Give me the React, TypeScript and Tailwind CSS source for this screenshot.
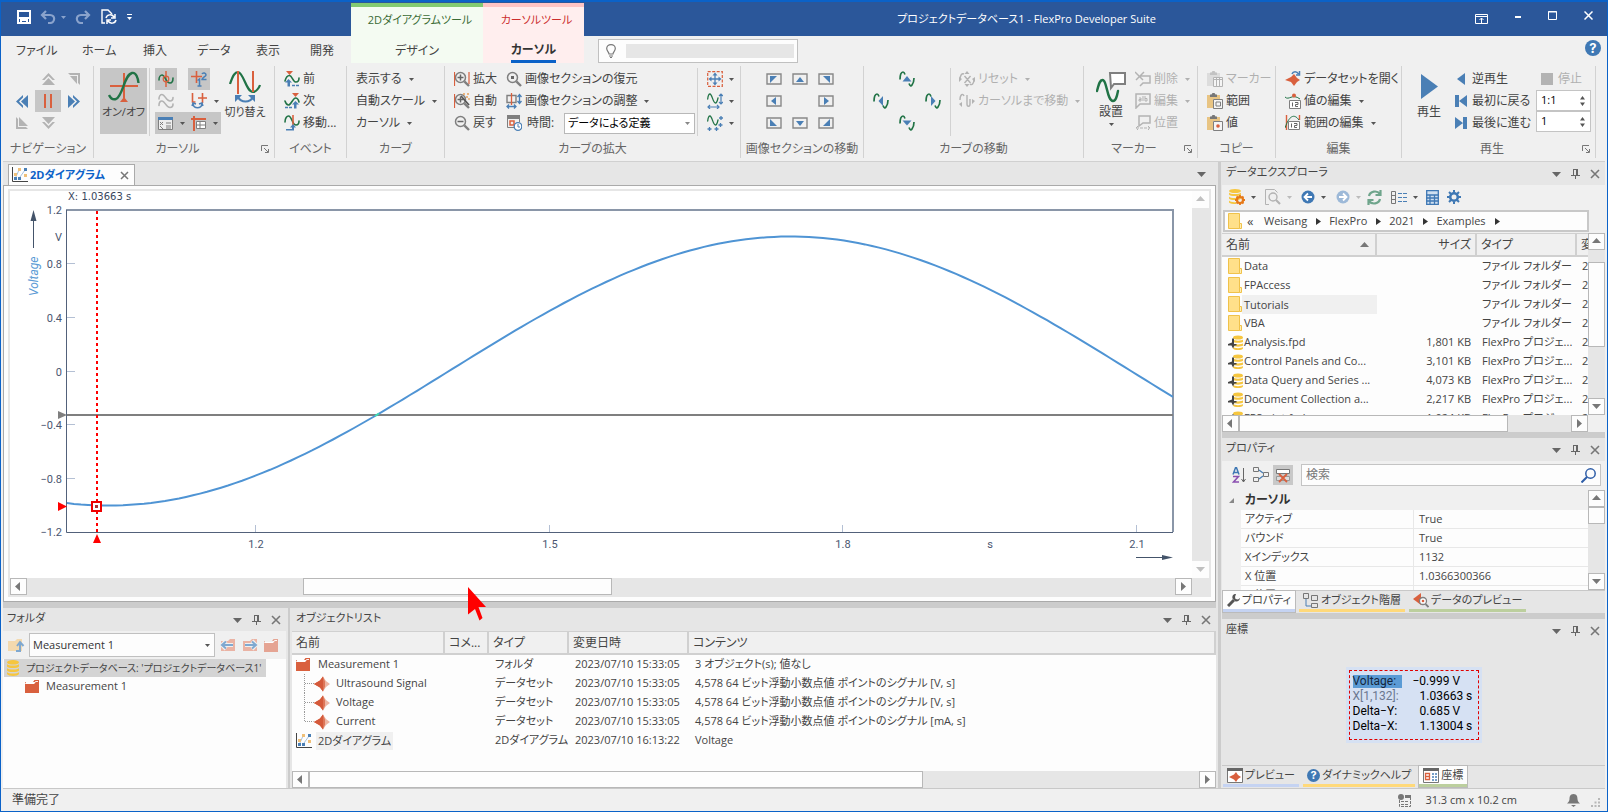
import React from "react";

type P = { children?: React.ReactNode; className?: string };

const GREEN = "#217346";
const ORANGE = "#d9603e";
const BLUE = "#4a7fb5";
const GRAY = "#7f7f7f";
const OFF = "#b3b3b3";

/* ---------- icon primitives ---------- */

function Icon({ w = 16, h = 16, box, children, className = "" }: P & { w?: number; h?: number; box?: string }) {
  return (
    <svg
      width={w}
      height={h}
      viewBox={box ?? `0 0 ${w} ${h}`}
      fill="none"
      aria-hidden="true"
      className={`block shrink-0 ${className}`}
    >
      {children}
    </svg>
  );
}

const Caret = ({ color = "#555" }: { color?: string }) => (
  <Icon w={5} h={3}>
    <path d="M0 0h5L2.500 3z" fill={color} />
  </Icon>
);

const BigCaret = () => (
  <Icon w={9} h={5}>
    <path d="M0 0h9L4.500 5z" fill="#666" />
  </Icon>
);

const Wave = ({ color = GREEN, d = "M1 9C1 6 2.500 4 4 4C7 4 8 12 12 12C14 12 15 10 15 7", width = 1.6 }) => (
  <path d={d} stroke={color} strokeWidth={width} strokeLinecap="round" />
);

const FolderIcon = ({ color = "#d9603e" }: { color?: string }) => (
  <Icon w={16} h={15}>
    <path d="M0 3h8l1.500-2H14v2H1v2z" fill={color} />
    <path d="M0 5l9 0 1.500-2H14v11H0z" fill={color} />
    <path d="M1 4.500h8l1.500-2H13" stroke="#fff" strokeWidth=".9" />
  </Icon>
);

const DatasetIcon = ({ size = 16 }: { size?: number }) => (
  <Icon w={size} h={size} box="0 0 16 16">
    <path d="M0 8L6 4.500 9 .5 12 5l4 3-4 3-3 4.500L6 11.500z" fill="#edb5a3" />
    <path d="M0 8L6 4.500 9 .5l2 5V10.500l-2 5-3-4z" fill="#dd7557" />
    <path d="M0 8L6 4.500 9 .5v15l-3-4z" fill="#d4593a" />
  </Icon>
);

const DbIcon = ({ w = 12, h = 16 }) => (
  <Icon w={w} h={h} box="0 0 12 16">
    <ellipse cx="6" cy="2.300" rx="6" ry="2.300" fill="#f6c63f" />
    <path d="M0 4c1 2 11 2 12 0v2.500c-1 2-11 2-12 0z" fill="#f6c63f" />
    <path d="M0 8c1 2 11 2 12 0v2.500c-1 2-11 2-12 0z" fill="#f6c63f" />
    <path d="M0 12c1 2 11 2 12 0v2c-1 2.500-11 2.500-12 0z" fill="#f6c63f" />
  </Icon>
);

const ProjectIcon = () => (
  <Icon w={16} h={16}>
    <ellipse cx="10" cy="2.500" rx="5" ry="2" fill="#f6c63f" />
    <path d="M5 4.500c1 1.500 9 1.500 10 0v2.200c-1 1.500-9 1.500-10 0zM5 8.300c1 1.500 9 1.500 10 0v2.200c-1 1.500-9 1.500-10 0zM5 12c1 1.500 9 1.500 10 0v1.600c-1 2-9 2-10 0z" fill="#f6c63f" />
    <path d="M4 3.500h2V9h2.500v1.500H6.500L5 13.500l-1.500-3H0V9l4-1.500z" fill="#444" />
  </Icon>
);

const YellowFolder = () => (
  <Icon w={14} h={17}>
    <path d="M.5.5h11v15H.5z" fill="#ffe08a" stroke="#f0c24a" />
    <path d="M11.500 10.500h2v5h-2z" fill="#ffeeb4" stroke="#f0c24a" />
  </Icon>
);

const DiagramIcon = () => (
  <Icon w={16} h={16}>
    <path d="M.5 0v14.500H16" stroke="#444" />
    <path d="M3 12L7 3M8 10l5-7" stroke="#a8c2dc" />
    <path d="M2 6h3v3H2zM6 1h3v3H6zM12 7h3v3h-3z" fill="#f0c078" />
    <path d="M2 10h3v3H2zM6 10h3v3H6zM12 1h3v3h-3z" fill={BLUE} />
  </Icon>
);

const HelpIcon = () => (
  <span className="flex size-4 shrink-0 items-center justify-center rounded-full bg-[#3f78b4] font-[Inter] text-[13px] leading-none font-bold text-white">?</span>
);

const SmallHelpIcon = () => (
  <span className="flex size-[13px] shrink-0 items-center justify-center rounded-full bg-[#3f78b4] font-[Inter] text-[11px] leading-none font-bold text-white">?</span>
);

const Lens = ({ children }: P) => (
  <Icon>
    <circle cx="6.500" cy="6.500" r="5" stroke={GRAY} strokeWidth="1.500" />
    <path d="M10.300 10.300L15 15" stroke={GRAY} strokeWidth="2.400" />
    {children}
  </Icon>
);

const Clip = ({ off, children }: P & { off?: boolean }) => (
  <Icon>
    <path d="M0 2h13v4H6v9H0z" fill={off ? "#dcdcdc" : "#e8c483"} />
    <path d="M3 1.500h1.500L5.500 0h2l1 1.500H10v2.500H3z" fill={off ? "#c2c2c2" : "#777"} />
    <path d="M6.500 6.500h9v9h-9z" fill="#f5f5f5" stroke={off ? OFF : GRAY} />
    {children}
  </Icon>
);

const CurvePair = ({ tri, off }: { tri: string; off?: boolean }) => (
  <Icon>
    <path d="M1 8.500C1 4 2 1 4 1C5 1 5.500 2 6 3.500" stroke={off ? OFF : GREEN} strokeWidth="1.700" />
    <path d="M10 12.500C11 15 12 15.500 13 14C14.500 12 15 10 15 7" stroke={off ? OFF : GREEN} strokeWidth="1.700" />
    <path d={tri} fill={off ? OFF : BLUE} />
  </Icon>
);

const FrameTri = ({ tri }: { tri: string }) => (
  <Icon w={16} h={12}>
    <path d="M1 1h14v10H1z" stroke="#888" strokeWidth="1.400" />
    <path d={tri} fill={BLUE} />
  </Icon>
);

const T = {
  up: "M3.500 10.500L8 5l4.500 5.500z",
  down: "M3.500 5.500h9L8 10.500z",
  left: "M10 3v10L5.500 8z",
  right: "M6 3v10l4.500-5z",
};

/* ---------- ribbon building blocks ---------- */

function Group({ label, width, launcher, children }: P & { label: string; width: string; launcher?: boolean }) {
  return (
    <section className={`flex h-[92px] shrink-0 flex-col border-r border-[#d2d2d2] pt-[2px] ${width}`}>
      <div className="flex h-[66px]">{children}</div>
      <div className="flex flex-1 items-center pt-[6px] text-[#666]">
        <span className="flex-1 text-center whitespace-nowrap">{label}</span>
        {launcher && (
          <button aria-label={`${label}オプション`} className="mr-1 w-[9px]">
            <Icon w={8} h={8}>
              <path d="M.5 6V.5H7M3 3l4 4M7.500 4v3.500H4" stroke="#777" />
            </Icon>
          </button>
        )}
      </div>
    </section>
  );
}

function Item({ icon, label, arrow, off, gap = "gap-[3px]" }: { icon?: React.ReactNode; label: string; arrow?: boolean; off?: boolean; gap?: string }) {
  return (
    <button className={`flex h-[22px] items-center whitespace-nowrap ${gap} ${off ? "text-[#b0b0b0]" : "text-[#444]"}`}>
      {icon}
      <span>{label}</span>
      {arrow && (
        <span className="ml-1">
          <Caret color={off ? "#b0b0b0" : "#555"} />
        </span>
      )}
    </button>
  );
}

const Divider = ({ className = "" }: P) => <div className={`h-[68px] w-px shrink-0 bg-[#d2d2d2] ${className}`} />;

const IconBtn = ({ label, children, className = "" }: P & { label: string }) => (
  <button aria-label={label} className={`flex h-[22px] items-center justify-center ${className}`}>
    {children}
  </button>
);

function Ribbon() {
  return (
    <div className="flex h-[99px] shrink-0 items-start overflow-hidden border-b border-[#d0d0d0] bg-[#f0f0f0] pt-[3px] text-[12px]">
      <Group label="ナビゲーション" width="w-[91px]">
        <div className="ml-[6px] grid w-[78px] grid-cols-3">
          <span />
          <IconBtn label="上"><Icon w={13} h={12}><path d="M6.500 0L13 7h-2.500L6.500 3 2.500 7H0zM6.500 5l6.500 7H0z" fill={OFF} /></Icon></IconBtn>
          <IconBtn label="右上"><Icon w={12} h={12}><path d="M0 0h12v12l-2-2V2H2zM2 3h7v8z" fill={OFF} /></Icon></IconBtn>
          <IconBtn label="左"><Icon w={12} h={13}><path d="M7 0v2.500L3 6.500l4 4V13L0 6.500zM12 0v13L5 6.500z" fill={BLUE} /></Icon></IconBtn>
          <IconBtn label="一時停止" className="bg-[#c6c6c6]"><Icon w={8} h={14}><path d="M1 0v14M7 0v14" stroke={ORANGE} strokeWidth="2" /></Icon></IconBtn>
          <IconBtn label="右"><Icon w={12} h={13}><path d="M5 0v2.500l4 4-4 4V13l7-6.500zM0 0v13l7-6.500z" fill={BLUE} /></Icon></IconBtn>
          <IconBtn label="左下"><Icon w={12} h={12}><path d="M0 0v12h12l-2-2H2V2zM3 0v9h9z" fill={OFF} /></Icon></IconBtn>
          <IconBtn label="下"><Icon w={13} h={12}><path d="M0 0h13L6.500 7zM0 5h2.500l4 4 4-4H13l-6.500 7z" fill={OFF} /></Icon></IconBtn>
          <span />
        </div>
      </Group>

      <Group label="カーソル" width="w-[181px]" launcher>
        <button className="ml-[6px] flex w-[47px] shrink-0 flex-col items-center bg-[#c6c6c6] pt-[3px] whitespace-nowrap">
          <Icon w={32} h={32}>
            <path d="M16 2v25M2 15h28" stroke={ORANGE} strokeWidth="2" />
            <path d="M16 26l4 5h-8z" fill={ORANGE} />
            <path d="M1 24C3 28 5 29 8 28C15 25 16 4 24 2C28 1 30 7 30.500 12" stroke={GREEN} strokeWidth="2.400" />
          </Icon>
          <span className="text-[11px] leading-[18px]">オン/オフ</span>
        </button>
        <Divider className="ml-[2px]" />
        <div className="ml-[5px] flex w-[66px] shrink-0 flex-col">
          <div className="flex gap-[11px]">
            <IconBtn label="曲線に連動" className="w-[22px] bg-[#c6c6c6]"><Icon><path d="M8 0v16" stroke={ORANGE} strokeWidth="1.500" /><Wave /><circle cx="8" cy="8" r="2.800" stroke={ORANGE} strokeWidth="1.200" /></Icon></IconBtn>
            <IconBtn label="番号" className="w-[22px] bg-[#c6c6c6]"><Icon><path d="M5.500 0v12M0 5.500h11" stroke={ORANGE} strokeWidth="1.600" /><path d="M6.500 9.500L8.500 8v7M6.500 15h4M11 3c1-2 4-1 4 1 0 1.500-4 2.500-4 4.500h4.500" stroke={BLUE} strokeWidth="1.500" /></Icon></IconBtn>
          </div>
          <div className="flex items-center gap-[11px]">
            <IconBtn label="複数曲線" className="w-[22px]"><Icon><Wave color={OFF} d="M1 6C1 3 2.500 1.500 4 1.500C7 1.500 8 8 12 8C14 8 15 6.500 15 4.500" /><Wave color={OFF} d="M1 12.500C1 9.500 2.500 8 4 8C7 8 8 14.500 12 14.500C14 14.500 15 13 15 11" /></Icon></IconBtn>
            <IconBtn label="結合" className="w-[33px] gap-[7px]"><Icon><path d="M1.500 0v9h3M11.500 0v10M7 5h9" stroke={ORANGE} strokeWidth="1.600" /><path d="M2 11c1 5 8 5 9 0M1 13l1-3 3 1M8 11l3-1 1 3" stroke={BLUE} strokeWidth="1.400" /></Icon><Caret /></IconBtn>
          </div>
          <div className="flex bg-[#c6c6c6]">
            <IconBtn label="座標ウィンドウ" className="w-[33px] gap-[7px]"><Icon w={15} h={13}><path d="M.5.5h14v12H.5z" fill="#eee" stroke={GRAY} /><path d="M0 0h15v3H0z" fill={BLUE} /><path d="M2 5l3 3M5 5L2 8M2 9l3 3M8 6h5M8 9h5M8 11h5" stroke={GRAY} /></Icon><Caret /></IconBtn>
            <IconBtn label="座標テーブル" className="w-[33px] gap-[7px]"><Icon w={15} h={15}><path d="M3 0v15M0 3h15" stroke={ORANGE} strokeWidth="2" /><path d="M5.500 5.500h9v7h-9zM5 9h9M9 5v8" fill="#fff" stroke={GRAY} /></Icon><Caret /></IconBtn>
          </div>
        </div>
        <button className="ml-px flex w-[46px] shrink-0 flex-col items-center pt-[2px] text-[11px] whitespace-nowrap">
          <Icon w={32} h={33}>
            <path d="M1 14C4 5 6 2 9 2C15 3 17 22 24 22C27 22 30 18 31 15" stroke={GREEN} strokeWidth="2.200" />
            <path d="M9 1v23M24 1v21" stroke={ORANGE} strokeWidth="2" />
            <path d="M9 27c3 6 12 6 15 0" stroke={BLUE} strokeWidth="2.200" />
            <path d="M6 32v-7h7zM26 32v-7h-7z" fill={BLUE} />
          </Icon>
          <span className="leading-[18px]">切り替え</span>
        </button>
      </Group>

      <Group label="イベント" width="w-[72px]">
        <div className="ml-[9px]">
          <Item label="前" icon={<Icon><path d="M2 0h7L5.500 4z" fill={ORANGE} /><Wave d="M1 10C2 6 4 4.500 5.500 4.500C8 4.500 9 11 12 11C14 11 15 9 15 7" /><path d="M15 14.500H7" stroke={BLUE} strokeWidth="1.400" strokeDasharray="3 1" /><path d="M6 15.500H3.500v-4H1L4.500 8 8 11.500H6z" fill={BLUE} /></Icon>} />
          <Item label="次" icon={<Icon><path d="M8 0h7l-3.500 4z" fill={ORANGE} /><Wave d="M1 8C2 11 3 12 4.500 12C7 12 9 5 11.500 5C13.500 5 14.500 7 15 9" /><path d="M1 14.500h8" stroke={BLUE} strokeWidth="1.400" strokeDasharray="3 1" /><path d="M10 15.500h2.500v-4H15L11.500 8 8 11.500h2z" fill={BLUE} /></Icon>} />
          <Item label="移動..." icon={<Icon><Wave d="M1 7C1 3 3 1 4.500 1C8 1 8 10 12 10C14 10 15 8 15 6" /><path d="M9 0v10" stroke={ORANGE} strokeWidth="1.600" /><path d="M2 15.500h8v-3h2L9 9l-3 3.500h2v1.500H2z" fill={BLUE} /></Icon>} />
        </div>
      </Group>

      <Group label="カーブ" width="w-[98px]">
        <div className="ml-[9px]">
          <Item label="表示する" arrow />
          <Item label="自動スケール" arrow />
          <Item label="カーソル" arrow />
        </div>
      </Group>

      <Group label="カーブの拡大" width="w-[296px]">
        <div className="ml-[9px] flex w-[242px] shrink-0 flex-col">
          <div className="flex">
            <div className="w-[52px]"><Item label="拡大" icon={<Lens><path d="M.5 1v14M15 1v12" stroke={ORANGE} strokeWidth="1.200" /><path d="M6.500 3.500v6M3.500 6.500h6" stroke="#666" strokeWidth="1.500" /></Lens>} /></div>
            <Item label="画像セクションの復元" icon={<Lens><path d="M5 5h3v3H5z" fill="#666" /></Lens>} />
          </div>
          <div className="flex">
            <div className="w-[52px]"><Item label="自動" icon={<Lens><path d="M.5 1v14" stroke={ORANGE} strokeWidth="1.200" /><path d="M6.500 3.500v6M3.500 6.500h6" stroke="#666" strokeWidth="1.500" /><path d="M7 3l8 9" stroke="#555" strokeWidth="1.800" /><path d="M9 1h2M13 1h2M12 4h2M15 5v2" stroke="#e6a05a" strokeWidth="1.300" /></Lens>} /></div>
            <Item label="画像セクションの調整" arrow icon={<Icon><path d="M1 2.500h9v7H1z" stroke={GRAY} strokeWidth="1.400" /><path d="M5.500 0v12" stroke={ORANGE} strokeWidth="1.300" /><path d="M13.500 2v8M11.500 4l2-2.500 2 2.500M11.500 8l2 2.500 2-2.500M1 13.500h9M3 11.500l-2 2 2 2M8 11.500l2 2-2 2" stroke={BLUE} strokeWidth="1.300" /></Icon>} />
          </div>
          <div className="flex items-center">
            <div className="w-[52px]"><Item label="戻す" icon={<Lens><path d="M3.500 6.500h6" stroke="#666" strokeWidth="1.500" /></Lens>} /></div>
            <label htmlFor="time" className="flex w-[58px] items-center gap-[5px] whitespace-nowrap text-[#444]">
              <Icon><path d="M1 0h13v4H1z" fill={GRAY} /><path d="M1.500 4v8.500H8M13.500 4v3" stroke={GRAY} /><path d="M4 6h4v4H4z" stroke={ORANGE} strokeWidth="1.500" /><circle cx="12" cy="11.500" r="3.800" fill="#fff" stroke={BLUE} strokeWidth="1.300" /><path d="M12 9v3h2" stroke={BLUE} /></Icon>
              時間:
            </label>
            <span className="flex h-[21px] w-[131px] items-center border border-[#b8b8b8] bg-white pr-1">
              <select id="time" className="h-full w-full appearance-none bg-transparent pl-[3px] text-[11px] text-black outline-none">
                <option>データによる定義</option>
              </select>
              <Caret color="#888" />
            </span>
          </div>
        </div>
        <Divider className="ml-[1px]" />
        <div className="ml-[8px] flex w-[28px] shrink-0 flex-col">
          <IconBtn label="移動の方向" className="gap-[6px]"><Icon><path d="M.7.7h14.600v14.600H.7z" stroke={ORANGE} strokeWidth="1.200" strokeDasharray="3 1.500" /><path d="M8 3v10M3 8h10" stroke={BLUE} strokeWidth="1.300" /><path d="M8 1.500l2.500 3h-5zM8 14.500l2.500-3h-5zM1.500 8l3-2.500v5zM14.500 8l-3-2.500v5z" fill={BLUE} /></Icon><Caret /></IconBtn>
          <IconBtn label="伸縮" className="gap-[6px]"><Icon><Wave d="M.7 6C1 3 2 1 3 1C5 1 6 10 8.500 10C10 10 10.500 7 11 5" width={1.300} /><path d="M14 1v10M12 3l2-2 2 2M12 9l2 2 2-2M1 14h11M3 12l-2 2 2 2M10 12l2 2-2 2" stroke={BLUE} strokeWidth="1.200" /></Icon><Caret /></IconBtn>
          <IconBtn label="ステップ" className="gap-[6px]"><Icon><Wave d="M.7 6C1 3 2 1 3 1C5 1 6 10 8.500 10C10 10 10.500 7 11 5" width={1.300} /><path d="M14 1v4M12 3h4M13.500 8v4M11.500 10h4M2.500 12v4M.5 14h4M9.500 12v4M7.500 14h4" stroke={BLUE} strokeWidth="1.300" /></Icon><Caret /></IconBtn>
        </div>
      </Group>

      <Group label="画像セクションの移動" width="w-[123px]">
        <div className="ml-[20px] grid w-[78px] grid-cols-3">
          <IconBtn label="左上へ"><FrameTri tri="M4 3h7l-7 7z" /></IconBtn>
          <IconBtn label="上へ"><FrameTri tri="M4 9l4-5 4 5z" /></IconBtn>
          <IconBtn label="右上へ"><FrameTri tri="M12 3H5l7 7z" /></IconBtn>
          <IconBtn label="左へ"><FrameTri tri="M10 2v8L5 6z" /></IconBtn>
          <span />
          <IconBtn label="右へ"><FrameTri tri="M6 2v8l5-4z" /></IconBtn>
          <IconBtn label="左下へ"><FrameTri tri="M4 2v7h7z" /></IconBtn>
          <IconBtn label="下へ"><FrameTri tri="M4 4h8L8 9z" /></IconBtn>
          <IconBtn label="右下へ"><FrameTri tri="M12 2v7H5z" /></IconBtn>
        </div>
      </Group>

      <Group label="カーブの移動" width="w-[220px]">
        <div className="ml-[4px] grid w-[78px] shrink-0 grid-cols-3">
          <span />
          <IconBtn label="曲線を上へ"><CurvePair tri={T.up} /></IconBtn>
          <span />
          <IconBtn label="曲線を左へ"><CurvePair tri={T.left} /></IconBtn>
          <span />
          <IconBtn label="曲線を右へ"><CurvePair tri={T.right} /></IconBtn>
          <span />
          <IconBtn label="曲線を下へ"><CurvePair tri={T.down} /></IconBtn>
          <span />
        </div>
        <Divider className="ml-[4px]" />
        <div className="ml-[8px]">
          <Item off arrow label="リセット" icon={<Icon><path d="M1 9C1 4 3 2 5 3M11 13c2 2 4-1 4-5M5.500 5l6 7M11.500 5l-6 7" stroke={OFF} strokeWidth="1.400" /><path d="M8 0l2.500 3h-5zM8 16l2.500-3h-5zM3 8L0 6v5zM13 8l3-2v5z" fill={OFF} /></Icon>} />
          <Item off arrow label="カーソルまで移動" icon={<Icon><path d="M1 7C1 1 4 0 5 3M8 2v9c0 3 3 3 3 0V6" stroke={OFF} strokeWidth="1.400" /><path d="M0 11l3-2v5zM16 8l-3-2v5z" fill={OFF} /></Icon>} />
        </div>
      </Group>

      <Group label="マーカー" width="w-[114px]" launcher>
        <button className="ml-[7px] flex w-[40px] shrink-0 flex-col items-center pt-[2px] text-[#444]">
          <Icon w={30} h={33}>
            <path d="M1 21C3 13 4 10 6.500 10C11 10 11 31 17 31C20 31 21 26 22 21" stroke={GREEN} strokeWidth="2.400" strokeLinecap="round" />
            <path d="M14 3h15v11H18l-3 4z" fill="#fff" stroke={GRAY} strokeWidth="2" />
          </Icon>
          <span className="leading-[18px]">設置</span>
          <span className="mt-[2px]"><Caret /></span>
        </button>
        <div className="ml-[4px]">
          <Item off arrow label="削除" icon={<Icon><path d="M5 5h10v7H8l-3 3M0 1l8 8M9 1L1 9" stroke={OFF} strokeWidth="1.500" /></Icon>} />
          <Item off arrow label="編集" icon={<Icon><path d="M1 1h14v10H5l-4 4z" stroke={OFF} strokeWidth="1.500" /><path d="M4 5h2v3H4V6.500h2M8 3v5M10 3v5h2V5.500h-2" stroke={OFF} /></Icon>} />
          <Item off label="位置" icon={<Icon><path d="M4 1h11v7H8l-4 3z" stroke={OFF} strokeWidth="1.500" /><path d="M1 13h14M3 11l-2 2 2 2M13 11l2 2-2 2" stroke={OFF} strokeDasharray="3 1" /></Icon>} />
        </div>
      </Group>

      <Group label="コピー" width="w-[78px]">
        <div className="ml-[9px]">
          <Item off label="マーカー" icon={<Clip off><path d="M6 8.500h10M9.500 7v9M12.500 7v9" stroke={OFF} /></Clip>} />
          <Item label="範囲" icon={<Clip><path d="M9 9h4.500v4H9z" stroke={GRAY} /></Clip>} />
          <Item label="値" icon={<Clip><circle cx="11" cy="11" r="1.800" fill={ORANGE} /></Clip>} />
        </div>
      </Group>

      <Group label="編集" width="w-[126px]">
        <div className="ml-[9px]">
          <Item label="データセットを開く" icon={<Icon><path d="M0 9l6-3 3-3 3 4 3 2-3 2-3 4-3-4z" fill={ORANGE} /><path d="M7 3c1-3 5-3 6.500 0M14.500 0v4H11" stroke={BLUE} strokeWidth="1.500" /></Icon>} />
          <Item arrow label="値の編集" icon={<Icon><path d="M0 4c4 4 7-4 15 2" stroke={GREEN} /><circle cx="9" cy="2.500" r="2" fill={ORANGE} /><path d="M4.500 7.500h11v8h-11z" fill="#fff" stroke={GRAY} /><path d="M7.500 9.500v4M10 9.500h3v2h-2.500v2H13" stroke="#666" /></Icon>} />
          <Item arrow label="範囲の編集" icon={<Icon><path d="M1.500 0v15M14.500 0v5" stroke={ORANGE} strokeWidth="1.400" /><path d="M0 13C4 1 9-2 14 5" stroke={GREEN} /><path d="M3.500 6.500h11v8h-11z" fill="#fff" stroke={GRAY} /><path d="M6.500 8.500v4M9 8.500h3v2H9.500v2H12" stroke="#666" /></Icon>} />
        </div>
      </Group>

      <Group label="再生" width="w-[194px]" launcher>
        <button className="ml-[7px] flex w-[40px] shrink-0 flex-col items-center pt-[6px] text-[#444]">
          <Icon w={17} h={25}><path d="M0 0l17 12.500L0 25z" fill={BLUE} /></Icon>
          <span className="mt-[4px] leading-[18px]">再生</span>
        </button>
        <div className="ml-[6px] w-[81px] shrink-0">
          <Item gap="gap-[4px]" label="逆再生" icon={<Icon w={13} h={12}><path d="M10 0v12L2 6z" fill={BLUE} /></Icon>} />
          <Item gap="gap-[4px]" label="最初に戻る" icon={<Icon w={13} h={12}><path d="M0 0h4v12H0zM12 0v12L4 6z" fill={BLUE} /></Icon>} />
          <Item gap="gap-[4px]" label="最後に進む" icon={<Icon w={13} h={12}><path d="M8 0h4v12H8zM0 0v12l8-6z" fill={BLUE} /></Icon>} />
        </div>
        <div className="flex w-[55px] shrink-0 flex-col">
          <div className="pl-[5px]"><Item off gap="gap-[5px]" label="停止" icon={<Icon w={12} h={12}><path d="M0 0h12v12H0z" fill={OFF} /></Icon>} /></div>
          <Spin label="再生速度" value="1:1" />
          <Spin label="ステップ幅" value="1" />
        </div>
      </Group>
    </div>
  );
}

const Spin = ({ label, value }: { label: string; value: string }) => (
  <span className="flex h-[21px] items-center border border-[#c4c4c4] bg-white pr-[5px] pl-[4px]">
    <input aria-label={label} defaultValue={value} className="w-full min-w-0 bg-transparent text-[11px] text-black outline-none" />
    <Icon w={5} h={10}><path d="M0 3.500L2.500 0 5 3.500zM0 6.500h5L2.500 10z" fill="#555" /></Icon>
  </span>
);

/* ---------- window header ---------- */

function TitleBar() {
  return (
    <header className="flex h-[36px] shrink-0 border-t-2 border-[#0b62c8] bg-[#2b579a] text-white">
      <div className="flex w-[350px] shrink-0 items-center gap-[5px] pb-[4px] pl-[16px]">
        <button aria-label="保存"><Icon w={14} h={14}><path d="M1 1h12v12H1zM1 8h12M4 13v-3h6v3" stroke="#fff" strokeWidth="2" /></Icon></button>
        <button aria-label="元に戻す" className="ml-[4px]"><Icon w={16} h={14}><path d="M6 1L2 5l4 4M2 5h8c6 0 5 8 0 8H8" stroke="#8aa3cc" strokeWidth="2.200" /></Icon></button>
        <Caret color="#8aa3cc" />
        <button aria-label="やり直し" className="ml-[4px]"><Icon w={16} h={14}><path d="M10 1l4 4-4 4M14 5H6C0 5 1 13 6 13h2" stroke="#8aa3cc" strokeWidth="2.200" /></Icon></button>
        <button aria-label="更新" className="ml-[5px]"><Icon><path d="M4 14H1V1h6l4 4" stroke="#fff" strokeWidth="1.400" /><path d="M5 9c1-4 6-4 8-1M14 5v4h-4M15 11c-1 4-6 4-8 1M6 15v-4h4" stroke="#fff" strokeWidth="1.500" /></Icon></button>
        <button aria-label="カスタマイズ" className="ml-[5px]"><Icon w={5} h={6}><path d="M0 .5h5" stroke="#fff" /><path d="M0 3h5L2.500 6z" fill="#fff" /></Icon></button>
      </div>
      <div className="mt-[1px] flex w-[132px] shrink-0 items-center justify-center border-t-4 border-[#83ca72] bg-[#f4fbf2] pb-[2px] pl-[6px] text-[11px] whitespace-nowrap text-[#3b6b35]">2Dダイアグラムツール</div>
      <div className="mt-[1px] flex w-[101px] shrink-0 items-center justify-center border-t-4 border-[#ffc4c4] bg-[#ffeeee] pb-[2px] pl-[6px] text-[11px] whitespace-nowrap text-[#cc2e2e]">カーソルツール</div>
      <h1 className="flex flex-1 items-center justify-center pr-[6px] text-[11px] whitespace-nowrap">プロジェクトデータベース1 - FlexPro Developer Suite</h1>
      <div className="flex shrink-0 items-center gap-[27px] pr-[14px] pb-[8px]">
        <button aria-label="リボンの表示" className="pt-2"><Icon w={13} h={10}><path d="M.5.5h12v9H.5zM0 2.500h13M6.500 9V4M4.500 6l2-2 2 2" stroke="#fff" /></Icon></button>
        <button aria-label="最小化" className="pt-1"><Icon w={6} h={2}><path d="M0 0h6v2H0z" fill="#fff" /></Icon></button>
        <button aria-label="最大化"><Icon w={9} h={9}><path d="M.5.5h8v8h-8zM0 1h9" stroke="#fff" /></Icon></button>
        <button aria-label="閉じる"><Icon w={9} h={9}><path d="M.5.5l8 8M8.500.5l-8 8" stroke="#fff" strokeWidth="1.500" /></Icon></button>
      </div>
    </header>
  );
}

function MenuRow() {
  return (
    <nav className="flex h-[27px] shrink-0 bg-[#f0f0f0] text-[12px] text-[#444]">
      <div className="flex w-[348px] shrink-0 items-center pt-[2px] pl-[13px] whitespace-nowrap">
        <button className="w-[66px] text-left">ファイル</button>
        <button className="w-[61px] text-left">ホーム</button>
        <button className="w-[54px] text-left">挿入</button>
        <button className="w-[59px] text-left">データ</button>
        <button className="w-[54px] text-left">表示</button>
        <button className="w-[26px] text-left">開発</button>
      </div>
      <button className="w-[132px] shrink-0 bg-[#f4fbf2] pt-[2px]">デザイン</button>
      <div className="flex w-[101px] shrink-0 justify-center bg-[#ffeeee]">
        <button className="border-b-[3px] border-[#0b62c8] pt-[4px] font-bold text-[#333]">カーソル</button>
      </div>
      <div className="mt-[3px] ml-[14px] flex w-[200px] items-center gap-[10px] border border-[#c0c0c0] bg-[#fdfdfd] pr-[3px] pl-[7px]">
        <Icon w={10} h={14}><path d="M3 10C3 8 .7 7 .7 4.500.7 2 2.500.700 5 .7S9.300 2 9.300 4.500C9.300 7 7 8 7 10zM3 12h4M4 13.500h2" stroke="#777" strokeWidth="1.200" /></Icon>
        <input aria-label="操作アシスト" className="h-[14px] min-w-0 flex-1 bg-[#e6e6e6] outline-none" />
      </div>
      <div className="mt-[4px] mr-[4px] ml-auto"><HelpIcon /></div>
    </nav>
  );
}

/* ---------- panel parts ---------- */

function PanelHead({ title }: { title: string }) {
  return (
    <div className="flex h-[23px] shrink-0 items-center justify-between bg-[#e6e6e6] pr-[5px] pl-[4px] text-[#444]">
      <h2 className="pb-[2px] text-[11px] font-normal whitespace-nowrap">{title}</h2>
      <div className="flex items-center gap-[10px] pt-px">
        <button aria-label="メニュー"><BigCaret /></button>
        <button aria-label="固定"><Icon w={9} h={10}><path d="M2.500 0v6M6.500 0v6M2 .5h5M0 6.500h9M4.500 7v3M5.500 0v6" stroke="#666" /></Icon></button>
        <button aria-label="閉じる"><Icon w={10} h={10}><path d="M1 1l8 8M9 1L1 9" stroke="#777" strokeWidth="1.600" /></Icon></button>
      </div>
    </div>
  );
}

const arrows = {
  up: "M0 6L4.500 1 9 6z",
  down: "M0 2h9L4.500 7z",
  left: "M6 0v9L1 4.500z",
  right: "M2 0v9l5-4.500z",
};

const ScrollBtn = ({ dir, faint }: { dir: keyof typeof arrows; faint?: boolean }) => (
  <button aria-label={dir} className={`flex size-[17px] shrink-0 items-center justify-center bg-[#fdfdfd] ${faint ? "" : "border border-[#b8b8b8]"}`}>
    <Icon w={9} h={9}><path d={arrows[dir]} fill={faint ? "#c0c0c0" : "#777"} /></Icon>
  </button>
);

const Tab = ({ icon, label, line, active }: { icon: React.ReactNode; label: string; line: string; active?: boolean }) => (
  <button className={`flex h-[21px] items-center gap-[2px] border-b-[3px] px-[4px] text-[11px] whitespace-nowrap text-[#444] ${line} ${active ? "bg-[#fdfdfd] outline outline-[#bbb]" : ""}`}>
    {icon}
    {label}
  </button>
);

/* ---------- chart ---------- */

const curve = Array.from({ length: 159 }, (_, i) => {
  const x = 67 + i * 7;
  const y = 371 - 134.5 * Math.cos(((x - 790) / 682) * Math.PI);
  return `${i ? "L" : "M"}${x} ${y.toFixed(1)}`;
}).join("");

function Chart() {
  const ys: [string, number][] = [["1.2", 210], ["0.8", 264], ["0.4", 318], ["0", 372], ["−0.4", 425], ["−0.8", 479], ["−1.2", 532]];
  const xs: [string, number][] = [["1.2", 256], ["1.5", 550], ["1.8", 843], ["2.1", 1137]];
  return (
    <svg viewBox="10 191 1182 387" className="block h-full min-h-0 w-full" role="img" aria-label="Voltage" fontFamily="Roboto, 'Noto Sans CJK JP', sans-serif" fontSize="11" fill="#4a5670">
      <text x="68" y="200" fontSize="10" fontFamily="'DejaVu Sans', sans-serif" fill="#39465c">X: 1.03663 s</text>
      <path d="M66 210H1173V532" fill="none" stroke="#8a96a8" strokeWidth="2" />
      <path d="M66.500 210V532.500H1173" fill="none" stroke="#52617a" />
      {ys.map(([t, y]) => (
        <g key={t}>
          <text x="62" y={y + 4} textAnchor="end">{t}</text>
          {y > 210 && y < 532 && <path d={`M67 ${y - 0.5}h8`} stroke="#b4c0d4" />}
        </g>
      ))}
      {xs.map(([t, x]) => (
        <g key={t}>
          <text x={x} y="548" textAnchor="middle">{t}</text>
          <path d={`M${x - 0.5} 525v7`} stroke="#b4c0d4" />
        </g>
      ))}
      <text x="62" y="241" textAnchor="end">V</text>
      <text x="990" y="548" textAnchor="middle">s</text>
      <text transform="translate(38 296) rotate(-90)" fontStyle="italic" fontSize="12" fill="#5b9bd5">Voltage</text>
      <path d="M33.500 215v33M1136 557.500h30" stroke="#44546a" />
      <path d="M33.500 210l3 11h-6zM1173 557.500l-11-2.500v5z" fill="#44546a" />
      <path d="M67 415H1173" stroke="#7f7f7f" strokeWidth="2" />
      <path d="M58 411v8l9-4z" fill="#7f7f7f" />
      <clipPath id="plot"><path d="M67 210h1106v323H67z" /></clipPath>
      <path d={curve} clipPath="url(#plot)" fill="none" stroke="#4f94d4" strokeWidth="2" />
      <path d="M375 416l4-2.500" stroke="#3fe0b0" strokeWidth="1.500" />
      <path d="M97 211v322" stroke="#f00" strokeWidth="2" strokeDasharray="3 3" />
      <path d="M92 502h9v9h-9z" fill="#fff" stroke="#e00" strokeWidth="2" />
      <path d="M95 505h3v3h-3z" fill="#a33" />
      <path d="M97 534l4 9h-8zM58 502v9l9-4.500z" fill="#f00" />
    </svg>
  );
}

function DocumentArea() {
  return (
    <section className="flex min-h-0 flex-1 flex-col">
      <div className="flex h-[23px] shrink-0 items-end bg-[#e6e6e6] pl-[5px]">
        <div className="flex h-[21px] w-[127px] items-center border border-b-0 border-[#aaa] bg-[#fdfdfd] pl-[3px]">
          <DiagramIcon />
          <span className="ml-[2px] text-[11px] font-bold whitespace-nowrap text-[#0b62c8]">2Dダイアグラム</span>
          <button aria-label="閉じる" className="mr-[5px] ml-auto"><Icon w={9} h={9}><path d="M1 1l7 7M8 1L1 8" stroke="#777" strokeWidth="1.500" /></Icon></button>
        </div>
        <button aria-label="ウィンドウ一覧" className="mr-[10px] mb-[8px] ml-auto"><BigCaret /></button>
      </div>
      <div className="flex min-h-0 flex-1 flex-col border border-[#aaa] bg-[#fdfdfd] p-[4px] pt-[3px]">
        <div className="flex min-h-0 flex-1 flex-col border-2 border-[#e6e6e6]">
          <div className="flex min-h-0 flex-1">
            <div className="min-w-0 flex-1 bg-white"><Chart /></div>
            <div className="flex w-[17px] shrink-0 flex-col justify-between bg-[#e6e6e6]">
              <ScrollBtn dir="up" faint />
              <ScrollBtn dir="down" faint />
            </div>
          </div>
          <div className="flex h-[17px] shrink-0 bg-[#e6e6e6] pr-[17px]">
            <ScrollBtn dir="left" />
            <div className="flex flex-1">
              <div className="w-[24%]" />
              <div className="w-[27%] border border-[#b8b8b8] bg-[#fdfdfd]" />
            </div>
            <ScrollBtn dir="right" />
          </div>
        </div>
      </div>
    </section>
  );
}

/* ---------- bottom panels ---------- */

function FolderPanel() {
  return (
    <section className="flex w-[283px] shrink-0 flex-col bg-[#fdfdfd]">
      <PanelHead title="フォルダ" />
      <div className="flex h-[28px] shrink-0 items-center bg-[#f0f0f0] pl-[5px]">
        <button aria-label="上のフォルダへ"><Icon w={17} h={15}><path d="M0 3h7l2-2h5v12H0z" fill="#f3d9ae" /><path d="M8 13h4V5M9 8l3-4 3.500 4" stroke="#7fa8d0" strokeWidth="2" /></Icon></button>
        <span className="ml-[4px] flex h-[24px] w-[186px] items-center border border-[#c0c0c0] bg-[#fdfdfd] pr-[4px]">
          <select aria-label="フォルダ" className="w-full appearance-none bg-transparent pl-[3px] text-[11px] text-[#333] outline-none"><option>Measurement 1</option></select>
          <Caret />
        </span>
        <div className="ml-[5px] flex gap-[6px]">
          <button aria-label="戻る"><Icon w={16} h={14}><path d="M1 3h7l2-2h5v12H1z" fill="#eab3a4" /><path d="M13 7H2M6 3L2 7l4 4" stroke="#f0f0f0" strokeWidth="4" /><path d="M13 7H2M6 3.500L2 7l4 3.500" stroke="#7fa8d0" strokeWidth="2" /></Icon></button>
          <button aria-label="進む"><Icon w={16} h={14}><path d="M1 3h7l2-2h5v12H1z" fill="#eab3a4" /><path d="M3 7h11M10 3l4 4-4 4" stroke="#f0f0f0" strokeWidth="4" /><path d="M3 7h11M10 3.500L14 7l-4 3.500" stroke="#7fa8d0" strokeWidth="2" /></Icon></button>
          <button aria-label="フォルダ"><FolderIcon color="#e5a493" /></button>
        </div>
      </div>
      <ul className="text-[11px] text-[#444]">
        <li className="ml-px flex h-[18px] w-fit items-center gap-[7px] bg-[#d4d4d4] pr-[4px] pl-[3px] text-[10px] whitespace-nowrap"><DbIcon />プロジェクトデータベース: 'プロジェクトデータベース1'</li>
        <li className="flex h-[19px] items-center gap-[5px] pl-[22px]"><FolderIcon />Measurement 1</li>
      </ul>
    </section>
  );
}

const objects: [string, string, string, string, number][] = [
  ["Measurement 1", "フォルダ", "2023/07/10 15:33:05", "3 オブジェクト(s); 値なし", 0],
  ["Ultrasound Signal", "データセット", "2023/07/10 15:33:05", "4,578 64 ビット浮動小数点値 ポイントのシグナル [V, s]", 1],
  ["Voltage", "データセット", "2023/07/10 15:33:05", "4,578 64 ビット浮動小数点値 ポイントのシグナル [V, s]", 1],
  ["Current", "データセット", "2023/07/10 15:33:05", "4,578 64 ビット浮動小数点値 ポイントのシグナル [mA, s]", 2],
  ["2Dダイアグラム", "2Dダイアグラム", "2023/07/10 16:13:22", "Voltage", 3],
];

const TH = ({ children, className = "" }: P) => (
  <th className={`h-[24px] border-t border-r-2 border-b-2 border-[#d0d0d0] bg-[#f0f0f0] px-[4px] text-left align-middle text-[12px] font-normal ${className}`}>{children}</th>
);

function ObjectList() {
  return (
    <section className="flex min-w-0 flex-1 flex-col bg-[#fdfdfd]">
      <PanelHead title="オブジェクトリスト" />
      <div className="min-h-0 flex-1 overflow-hidden">
        <table className="w-full table-fixed border-separate border-spacing-0 text-[11px] whitespace-nowrap text-[#444]">
          <colgroup><col className="w-[153px]" /><col className="w-[44px]" /><col className="w-[80px]" /><col className="w-[120px]" /><col /></colgroup>
          <thead><tr><TH>名前</TH><TH>コメ...</TH><TH>タイプ</TH><TH>変更日時</TH><TH>コンテンツ</TH></tr></thead>
          <tbody>
            {objects.map(([name, type, date, content, kind], i) => (
              <tr key={i} className="h-[19px]">
                <td className="p-0">
                  <span className="flex h-[19px] items-center pl-[4px]">
                    {kind === 0 && <><FolderIcon /><span className="ml-[6px]">{name}</span></>}
                    {(kind === 1 || kind === 2) && <>
                      <Icon w={18} h={19}><path d={kind === 1 ? "M8.500 0v19M9 9.500h9" : "M8.500 0v9.500h9"} stroke="#999" strokeDasharray="1 1" /></Icon>
                      <DatasetIcon /><span className="ml-[6px]">{name}</span></>}
                    {kind === 3 && <><DiagramIcon /><span className="ml-[4px] bg-[#f0f0f0] px-[2px] leading-[18px]">{name}</span></>}
                  </span>
                </td>
                <td />
                <td className="p-0 pl-[6px]">{type}</td>
                <td className="p-0 pl-[6px]">{date}</td>
                <td className="p-0 pl-[6px]">{content}</td>
              </tr>
            ))}
          </tbody>
        </table>
      </div>
      <div className="flex h-[17px] shrink-0 bg-[#e6e6e6]">
        <ScrollBtn dir="left" />
        <div className="flex flex-1"><div className="w-[69%] border border-[#b8b8b8] bg-[#fdfdfd]" /></div>
        <ScrollBtn dir="right" />
      </div>
    </section>
  );
}

/* ---------- right column ---------- */

const files: [string, string, string][] = [
  ["Data", "", "ファイル フォルダー"],
  ["FPAccess", "", "ファイル フォルダー"],
  ["Tutorials", "", "ファイル フォルダー"],
  ["VBA", "", "ファイル フォルダー"],
  ["Analysis.fpd", "1,801 KB", "FlexPro プロジェ..."],
  ["Control Panels and Co...", "3,101 KB", "FlexPro プロジェ..."],
  ["Data Query and Series ...", "4,073 KB", "FlexPro プロジェ..."],
  ["Document Collection a...", "2,217 KB", "FlexPro プロジェ..."],
  ["FPScript.fpd", "1,024 KB", "FlexPro プロジェ..."],
];

const RoundArrow = ({ color, d }: { color: string; d: string }) => (
  <Icon w={14} h={14}><circle cx="7" cy="7" r="6.500" fill={color} /><path d={d} stroke="#fff" strokeWidth="1.800" /></Icon>
);

function Explorer() {
  return (
    <section className="flex h-[270px] shrink-0 flex-col bg-[#f0f0f0]">
      <PanelHead title="データエクスプローラ" />
      <div className="flex h-[24px] shrink-0 items-center gap-[6px] pl-[7px]">
        <button aria-label="データベース設定"><Icon><g fill="#f6c63f"><ellipse cx="6" cy="2" rx="6" ry="2" /><path d="M0 3.500c1 2 11 2 12 0v2c-1 2-11 2-12 0zM0 7.500c1 2 11 2 12 0v2c-1 2-11 2-12 0zM0 11.500c1 1.500 5 2 7 1.500v2c-3 0-6 0-7-1.500z" /></g><circle cx="11" cy="11" r="3" stroke="#e67817" strokeWidth="2.200" /><path d="M11 6v2M11 14v2M6 11h2M14 11h2M7.500 7.500l1.500 1.500M13 13l1.500 1.500M14.500 7.500L13 9M9 13l-1.500 1.500" stroke="#e67817" strokeWidth="1.800" /></Icon></button>
        <Caret />
        <button aria-label="検索" className="ml-[3px]"><Icon><path d="M4 15.500H.5V.5h9l3 3" stroke={OFF} /><circle cx="8" cy="8" r="4" stroke={OFF} strokeWidth="1.400" /><path d="M11 11l4 4" stroke={OFF} strokeWidth="2.200" /></Icon></button>
        <Caret color="#bbb" />
        <button aria-label="戻る" className="ml-[3px]"><RoundArrow color="#3f78b4" d="M11 7H4M7 3.500L3.500 7 7 10.500" /></button>
        <Caret />
        <button aria-label="進む" className="ml-[4px]"><RoundArrow color="#9db9d8" d="M3 7h7M7 3.500L10.500 7 7 10.500" /></button>
        <Caret color="#bbb" />
        <button aria-label="更新"><Icon w={15} h={15}><path d="M2 6c1-5 8-6 11-2M13.500 0v5H8.500M13 9c-1 5-8 6-11 2M1.500 15v-5h5" stroke="#6fa58c" strokeWidth="2.200" /></Icon></button>
        <button aria-label="表示" className="ml-[3px]"><Icon w={16} h={13}><path d="M.5.5h4v12h-4zM.5 4.500h4M.5 8.500h4" stroke="#777" /><path d="M7 2.500h9M7 6.500h9M7 10.500h9" stroke={BLUE} strokeDasharray="4 1" /></Icon></button>
        <Caret />
        <button aria-label="計算" className="ml-[2px]"><Icon w={13} h={15}><path d="M.7.7h11.600v13.600H.7z" fill="#cfdff0" /><path d="M.7.7h11.600v13.600H.7zM0 5h13M0 8h13M0 11h13M4 5v10M8.500 5v10" stroke="#3f78b4" strokeWidth="1.300" /></Icon></button>
        <button aria-label="設定" className="ml-[2px]"><Icon w={14} h={14}><circle cx="7" cy="7" r="3.800" stroke="#3f78b4" strokeWidth="2.600" /><path d="M7 0v2.500M7 11.500V14M0 7h2.500M11.500 7H14M2 2l2 2M10 10l2 2M12 2l-2 2M4 10l-2 2" stroke="#3f78b4" strokeWidth="2" /></Icon></button>
      </div>
      <nav className="mt-px mr-[16px] ml-px flex h-[22px] shrink-0 items-center border-2 border-[#c8c8c8] bg-[#fdfdfd] pl-[3px] text-[11px] text-[#444]">
        <YellowFolder />
        <span className="ml-[5px] w-[9px] text-[13px] leading-none">«</span>
        {["Weisang", "FlexPro", "2021", "Examples"].map((p) => (
          <span key={p} className="flex items-center">
            <a href="#" className="mr-[9px] ml-[8px]">{p}</a>
            <Icon w={5} h={7}><path d="M0 0l5 3.500L0 7z" fill="#333" /></Icon>
          </span>
        ))}
      </nav>
      <div className="mt-px flex min-h-0 flex-1">
        <div className="flex min-w-0 flex-1 flex-col">
          <div className="min-h-0 flex-1 overflow-hidden bg-[#fdfdfd]">
            <table className="w-full table-fixed border-separate border-spacing-0 text-[11px] whitespace-nowrap text-[#444]">
              <colgroup><col className="w-[155px]" /><col className="w-[100px]" /><col className="w-[100px]" /><col /></colgroup>
              <thead>
                <tr>
                  <TH><span className="flex items-center justify-between pr-[2px]">名前<Icon w={9} h={5}><path d="M0 5L4.500 0 9 5z" fill="#777" /></Icon></span></TH>
                  <TH className="text-right!">サイズ</TH><TH>タイプ</TH>
                  <TH className="overflow-hidden border-r-0!">変更日時</TH>
                </tr>
              </thead>
              <tbody>
                {files.map(([name, size, type], i) => (
                  <tr key={name} className="h-[19px]">
                    <td className="p-0">
                      <span className="flex h-[19px] items-center pl-[6px]">
                        {i < 4 ? <YellowFolder /> : <ProjectIcon />}
                        <span className={i === 2 ? "flex-1 bg-[#f0f0f0] pl-[2px] leading-[19px]" : i < 4 ? "pl-[2px]" : ""}>{name}</span>
                      </span>
                    </td>
                    <td className="p-0 pr-[6px] text-right">{size}</td>
                    <td className="p-0 pl-[5px]">{type}</td>
                    <td className="overflow-hidden p-0 pl-[5px]">2021</td>
                  </tr>
                ))}
              </tbody>
            </table>
          </div>
          <div className="flex h-[17px] shrink-0 bg-[#e6e6e6]">
            <ScrollBtn dir="left" />
            <div className="flex flex-1"><div className="w-[81%] border border-[#b8b8b8] bg-[#fdfdfd]" /></div>
            <ScrollBtn dir="right" />
          </div>
        </div>
        <div className="mb-[17px] flex w-[17px] shrink-0 flex-col bg-[#e6e6e6]">
          <ScrollBtn dir="up" />
          <div className="flex flex-1 flex-col">
            <div className="h-[12px]" />
            <div className="h-[85px] border border-[#b8b8b8] bg-[#fdfdfd]" />
          </div>
          <ScrollBtn dir="down" />
        </div>
      </div>
    </section>
  );
}

const props: [string, string][] = [
  ["アクティブ", "True"],
  ["バウンド", "True"],
  ["Xインデックス", "1132"],
  ["X 位置", "1.0366300366"],
  ["Y 位置", ""],
];

function Properties() {
  return (
    <section className="flex h-[175px] shrink-0 flex-col bg-[#f0f0f0]">
      <PanelHead title="プロパティ" />
      <div className="flex h-[29px] shrink-0 items-center pr-[4px] pb-px pl-[10px]">
        <button aria-label="並べ替え" className="flex items-center gap-px">
          <Icon w={8} h={16}>
            <path d="M1 7.500L3.500.8h1L7 7.500M2 5.500h4" stroke="#3f78b4" strokeWidth="1.500" />
            <path d="M1 9.500h5.500L1.500 15H7" stroke="#8a4fb0" strokeWidth="1.600" />
          </Icon>
          <Icon w={5} h={15}><path d="M2.500 0v14M.5 11l2 3 2-3" stroke="#666" /></Icon>
        </button>
        <button aria-label="階層" className="ml-[7px]"><Icon><path d="M.5.5h5v4h-5zM.5 10.500h5v4h-5zM10.500 5.500h5v4h-5z" stroke="#777" /><path d="M6 3l4 3M6 12l4-3" stroke={BLUE} strokeWidth="1.300" /></Icon></button>
        <button aria-label="既定値を隠す" className="ml-[4px] flex size-[20px] items-center justify-center bg-[#c8c8c8]"><Icon w={14} h={15}><path d="M.5 1.500h13v4H.5z" fill="#fff" stroke="#777" /><path d="M.5 8.500h13v4H.5z" fill="#ddd" stroke="#999" /><path d="M3 6l8 8M11 6l-8 8" stroke={ORANGE} strokeWidth="1.800" /></Icon></button>
        <span className="ml-[8px] flex h-[22px] flex-1 items-center border border-[#c4c4c4] bg-[#fdfdfd] px-[4px]">
          <input aria-label="検索" placeholder="検索" className="w-full bg-transparent text-[12px] outline-none placeholder:text-[#777]" />
          <Icon w={15} h={15}><circle cx="9.500" cy="5.500" r="4.700" stroke="#2f5ea8" strokeWidth="1.500" /><path d="M6 9l-5.500 5.500" stroke="#2f5ea8" strokeWidth="2" /></Icon>
        </span>
      </div>
      <div className="flex min-h-0 flex-1">
        <div className="min-w-0 flex-1 overflow-hidden">
          <table className="w-full table-fixed border-separate border-spacing-0 text-[11px] text-[#444]">
            <colgroup><col className="w-[19px]" /><col className="w-[173px]" /><col /></colgroup>
            <thead><tr className="h-[20px]">
              <th className="p-0 pl-[7px]"><Icon w={5} h={5}><path d="M5 0v5H0z" fill="#888" /></Icon></th>
              <th colSpan={2} className="p-0 pl-[4px] text-left text-[12px] font-bold text-[#333]">カーソル</th>
            </tr></thead>
            <tbody>
              {props.map(([k, v]) => (
                <tr key={k}>
                  <td />
                  <td className="h-[19px] border-r border-b border-[#e8e8e8] bg-[#fdfdfd] p-0 pl-[4px]">{k}</td>
                  <td className="h-[19px] border-b border-[#e8e8e8] bg-[#fdfdfd] p-0 pl-[5px]">{v}</td>
                </tr>
              ))}
            </tbody>
          </table>
        </div>
        <div className="flex w-[17px] shrink-0 flex-col bg-[#e6e6e6]">
          <ScrollBtn dir="up" />
          <div className="flex-1"><div className="h-[17px] border border-[#b8b8b8] bg-[#fdfdfd]" /></div>
          <ScrollBtn dir="down" />
        </div>
      </div>
      <div className="flex h-[23px] shrink-0 gap-[4px] border-t border-[#c8c8c8] bg-[#e6e6e6] pl-px">
        <Tab active line="border-[#c5d3f2]" label="プロパティ" icon={<Icon w={13} h={13}><path d="M1 12l6-6" stroke="#555" strokeWidth="3" /><path d="M9 0c-3 0-4 2-3.500 4.500l3 3C11 8 13 6 13 4l-2 1.500L8.500 5 8 3z" fill="#555" /></Icon>} />
        <Tab line="border-[#ffd97a]" label="オブジェクト階層" icon={<Icon w={16} h={15}><path d="M.5.5h5v5h-5zM8.500 2.500h6v5h-6zM8.500 10.500h6v4h-6z" stroke="#777" /><path d="M3 6v7h5M3 8" stroke={BLUE} /></Icon>} />
        <Tab line="border-[#bccf9e]" label="データのプレビュー" icon={<Icon><path d="M0 7l8-6v12z" fill={ORANGE} /><circle cx="10" cy="9" r="3.500" fill="#fff" stroke={GRAY} strokeWidth="1.300" /><circle cx="10" cy="9" r="1.300" fill={ORANGE} /><path d="M12.500 12l3 3" stroke={GRAY} strokeWidth="1.800" /></Icon>} />
      </div>
    </section>
  );
}

function Coordinates() {
  const rows: [string, string, string][] = [
    ["Voltage:", "−0.999 V", "bg-[#5b9bd5] text-[#16263a]"],
    ["X[1,132]:", "1.03663 s", "text-[#6b7890]"],
    ["Delta−Y:", "0.685 V", ""],
    ["Delta−X:", "1.13004 s", ""],
  ];
  return (
    <section className="flex min-h-0 flex-1 flex-col bg-[#e6e6e6]">
      <PanelHead title="座標" />
      <div className="flex min-h-0 flex-1 items-center justify-center">
        <div className="mt-[2px] bg-[#d6e1f3] p-[3px]">
          <dl className="border border-dashed border-[#e00000] px-[3px] pt-[3px] pb-[5px] font-[Roboto] text-[12px] leading-[15px] text-black">
            {rows.map(([k, v, c], i) => (
              <div key={k} className="flex w-[122px] whitespace-nowrap">
                <dt className="w-[60px]"><span className={`inline-block w-[49px] leading-[13px] ${c}`}>{k}</span></dt>
                <dd className={i === 0 ? "" : "pl-[7px]"}>{v}</dd>
              </div>
            ))}
          </dl>
        </div>
      </div>
      <div className="flex h-[23px] shrink-0 gap-[4px] border-t border-[#c8c8c8] pl-px">
        <Tab line="border-[#c5d3f2]" label="プレビュー" icon={<Icon w={16} h={15}><path d="M.5.5h15v14H.5z" fill="#fff" stroke="#777" /><path d="M0 0h16v3H0z" fill="#666" /><path d="M2 9l5-2.500L9 4l2 3 3 2-3 2-2 3-2-2.500z" fill={ORANGE} /></Icon>} />
        <Tab line="border-[#ffd97a]" label="ダイナミックヘルプ" icon={<SmallHelpIcon />} />
        <Tab active line="border-[#bccf9e]" label="座標" icon={<Icon w={16} h={15}><path d="M.5.5h15v14H.5z" fill="#fff" stroke="#777" /><path d="M0 0h16v3H0z" fill="#666" /><path d="M2.500 5.500h4v6h-4zM2 8.500h5" stroke={ORANGE} strokeWidth="1.300" /><path d="M9 6h5M9 9h5M9 12h5" stroke={BLUE} strokeWidth="1.300" strokeDasharray="2 1" /></Icon>} />
      </div>
    </section>
  );
}

export default function App() {
  return (
    <div
      className="relative flex h-screen flex-col overflow-hidden border-x border-b border-[#0b62c8] bg-[#f0f0f0] text-[#444] select-none"
      style={{ fontFamily: '"Open Sans", "Noto Sans CJK JP", sans-serif', fontFeatureSettings: '"palt"' }}
    >
      <TitleBar />
      <div className="flex min-h-0 flex-1 flex-col px-[2px]">
        <MenuRow />
        <Ribbon />
        <main className="flex min-h-0 flex-1 border-b border-[#c8c8c8] bg-[#e6e6e6]">
          <div className="flex min-w-0 flex-1 flex-col">
            <DocumentArea />
            <div className="h-[6px] shrink-0 bg-[#ccc]" />
            <div className="flex h-[180px] shrink-0">
              <FolderPanel />
              <div className="w-[6px] shrink-0 border-x-2 border-[#e6e6e6] bg-[#ccc]" />
              <ObjectList />
            </div>
          </div>
          <div className="w-[6px] shrink-0 border-l-2 border-r border-[#e6e6e6] bg-[#ccc]" />
          <aside className="flex w-[383px] shrink-0 flex-col">
            <Explorer />
            <div className="h-[6px] shrink-0 bg-[#ccc]" />
            <Properties />
            <div className="h-[6px] shrink-0 bg-[#ccc]" />
            <Coordinates />
          </aside>
        </main>
        <footer className="flex h-[22px] shrink-0 items-center bg-[#f0f0f0] pl-[9px] text-[12px]">
          <span>準備完了</span>
          <span className="ml-auto flex items-center text-[11px]">
            <Icon w={13} h={13}><circle cx="3" cy="3" r="3" fill="#777" /><path d="M7 1h6v3H7z" fill="#777" /><path d="M1.500 6v6.500h11V4M3 7.500h8M3 10.500h8" stroke="#777" strokeDasharray="3 1" /></Icon>
            <span className="ml-[14px]">31.3 cm x 10.2 cm</span>
          </span>
          <button aria-label="通知" className="ml-[50px]"><Icon w={13} h={13}><path d="M6.500 0C3 0 2.500 3 2.500 5S1.500 8 0 9.500h13C11.500 8 10.500 7 10.500 5s-.5-5-4-5zM4 11h5l-2.500 2z" fill="#777" /></Icon></button>
          <Icon w={9} h={9} className="mt-[4px] mr-[5px] ml-[11px]"><path d="M7 0h2v2H7zM3.500 3.500h2v2h-2zM7 3.500h2v2H7zM0 7h2v2H0zM3.500 7h2v2h-2zM7 7h2v2H7z" fill="#b8b8b8" /></Icon>
        </footer>
      </div>
      <svg width="18" height="34" viewBox="0 0 18 34" aria-hidden="true" className="pointer-events-none absolute top-[587px] left-[467px]">
        <path d="M0 0l18 20H10.500l4 11-3 2.500L7 22 0 27.500z" fill="#f00" />
      </svg>
    </div>
  );
}
